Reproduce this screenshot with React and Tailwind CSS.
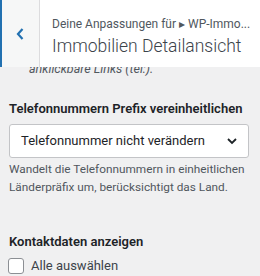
export default function App() {
    return (
        <div className="w-[260px] h-[276px] overflow-hidden bg-[#f0f0f1] font-['Roboto',sans-serif] text-[#1d2327]">
            <div className="flex h-[67px] bg-white border-l-2 border-l-[#2271b1]">
                <div className="w-[38px] shrink-0 flex items-center justify-center bg-[#f6f7f7] border-r border-r-[#dcdcde]">
                    <svg width="10" height="14" viewBox="0 0 10 14" className="ml-[-2px]">
                        <path d="M7.5 2 L3 7 L7.5 12" fill="none" stroke="#2271b1" strokeWidth="2.2" />
                    </svg>
                </div>
                <div className="flex flex-col pl-[12px] pt-[15px] min-w-0">
                    <span className="text-[12px] leading-[18px] text-[#50575e] whitespace-nowrap">Deine Anpassungen für ▸ WP-Immo...</span>
                    <span className="text-[17.5px] leading-[26px] font-light text-[#3c434a] whitespace-nowrap">Immobilien Detailansicht</span>
                </div>
            </div>

            <div className="h-[10px] overflow-hidden">
                <p className="-mt-[7px] pl-[29px] text-[12.5px] leading-[18px] italic text-[#50575e]">anklickbare Links (tel:).</p>
            </div>

            <div className="px-[9px] pt-[22px]">
                <h3 className="text-[13px] leading-[20px] font-semibold text-[#1d2327] whitespace-nowrap">Telefonnummern Prefix vereinheitlichen</h3>
                <div className="mt-[5px] h-[34px] w-[240px] flex items-center justify-between bg-white border border-[#c3c4c7] rounded-[3px] pl-[11px] pr-[10px]">
                    <span className="text-[13px] whitespace-nowrap">Telefonnummer nicht verändern</span>
                    <svg width="12" height="8" viewBox="0 0 12 8">
                        <path d="M2 2 L6 6 L10 2" fill="none" stroke="#1d2327" strokeWidth="1.8" />
                    </svg>
                </div>
                <p className="mt-[2px] text-[11.8px] leading-[18px] text-[#50575e] whitespace-nowrap">Wandelt die Telefonnummern in einheitlichen<br />Länderpräfix um, berücksichtigt das Land.</p>

                <h3 className="mt-[36px] text-[13px] leading-[20px] font-semibold">Kontaktdaten anzeigen</h3>
                <label className="mt-[4px] flex items-center gap-[7px]">
                    <span className="w-[16px] h-[16px] bg-white border border-[#8c8f94] rounded-[3px] -ml-[1px]"></span>
                    <span className="text-[13px] text-[#3c434a]">Alle auswählen</span>
                </label>
            </div>
        </div>
    )
}
